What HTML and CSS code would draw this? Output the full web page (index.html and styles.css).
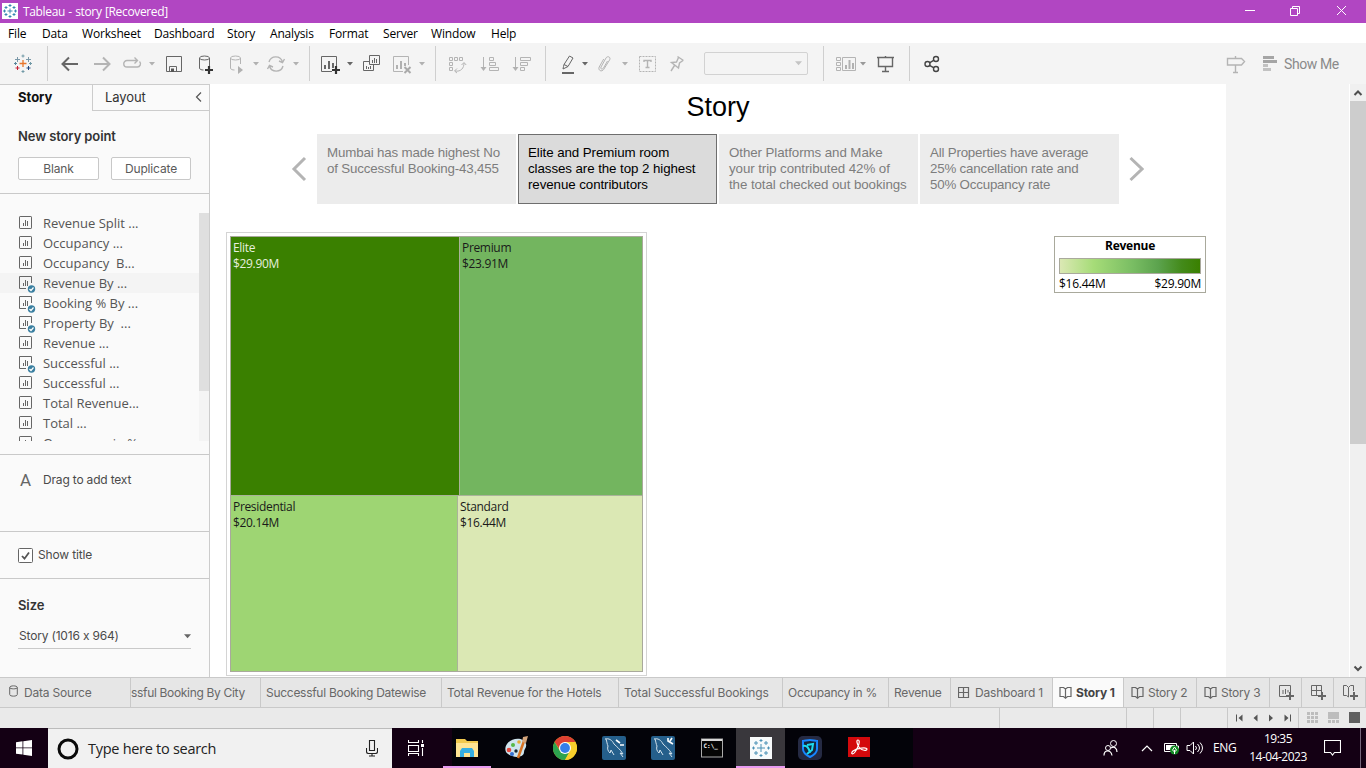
FILE: index.html
```html
<!DOCTYPE html>
<html lang="en">
<head>
<meta charset="utf-8">
<title>Tableau - story [Recovered]</title>
<link rel="stylesheet" href="styles.css">
</head>
<body>
<svg class="defs" width="0" height="0">
  <symbol id="sheet" viewBox="0 0 15 15"><rect x="1.500" y="1.500" width="12" height="12" rx=".6" fill="none" stroke="#666"/><path d="M5.500 8v3M7.500 5v6M9.500 6v5" stroke="#666" fill="none"/></symbol>
  <symbol id="sheet-used" viewBox="0 0 18 18"><path d="M8 13.500H1.500v-12h12V8" fill="none" stroke="#666"/><path d="M5.500 8v3M7.500 5v6M9.500 6v5" stroke="#666" fill="none"/><circle cx="13.500" cy="14" r="3.700" fill="#3a7fa0"/><path d="M11.500 14l1.500 1.500 2.500-3" fill="none" stroke="#fff" stroke-width="1.200"/></symbol>
  <symbol id="caret" viewBox="0 0 6 4"><path d="M0 0h6L3 3.600z"/></symbol>
  <symbol id="book" viewBox="0 0 13 13"><path d="M6.500 3v9M6.500 3L4.500 1.500H1v9h3.500l2 1.700 2-1.700H12v-9H8.500z" fill="none" stroke="#666" stroke-width="1.200"/></symbol>
</svg>

<header class="titlebar">
  <svg class="app-icon" viewBox="0 0 16 16"><path fill="#fff" d="M0 0h16v16H0z"/><path d="M8 1v3M6.500 2.500h3M8 12v3M6.500 13.500h3M1 8h3M2.500 6.500v3M12 8h3M13.500 6.500v3M8 5.500v5M5.500 8h5M4 3v3M2.500 4.500h3M12 3v3M10.500 4.500h3M4 10v3M2.500 11.500h3M12 10v3M10.500 11.500h3" stroke="#2b80ad" stroke-width=".9"/></svg>
  <span class="title-text">Tableau - story [Recovered]</span>
  <svg class="window-controls" viewBox="0 0 104 14"><path d="M0 7.500h10M45.500 5.500h7v7h-7zM47.500 5V3.500h7v7H53M92 3l9 9M101 3l-9 9" fill="none" stroke="#fff"/></svg>
</header>

<nav class="menu">
  <span class="w34">File</span><span class="w40">Data</span><span class="w72">Worksheet</span><span class="w73">Dashboard</span><span class="w43">Story</span><span class="w59">Analysis</span><span class="w54">Format</span><span class="w48">Server</span><span class="w60">Window</span><span>Help</span>
</nav>

<div class="toolbar">
  <svg class="ic" viewBox="0 0 20 20"><path d="M10 6v7M6.500 9.500h7" stroke="#e8762c" stroke-width="1.300"/><path d="M4.500 3v5M2 5.500h5M15.500 3v5M13 5.500h5" stroke="#7a98a8"/><path d="M4.500 12v4M2.500 14h4" stroke="#c72035"/><path d="M15.500 12v4M13.500 14h4" stroke="#1f447e"/><path d="M10 .5v3M8.500 2h3M10 16v3M8.500 17.500h3M17.500 8v3M16 9.500h3" stroke="#7099a6"/><path d="M2.500 8v3M1 9.500h3" stroke="#5b879b"/></svg>
  <i class="sep m14"></i>
  <svg class="ic m12" viewBox="0 0 20 20"><path d="M18 10H3M9 3.500L2.500 10 9 16.500" class="s2 dark"/></svg>
  <svg class="ic m12" viewBox="0 0 20 20"><path d="M2 10h15M11 3.500l6.500 6.500-6.500 6.500" class="s2 dim"/></svg>
  <svg class="ic m10" viewBox="0 0 20 20"><path d="M8 6.500H5a3.200 3.200 0 0 0 0 6.500h10a3.200 3.200 0 0 0 2.500-5.500M8 6.500h7M12.500 3.500l3 3-3 3" class="s1 dim thick"/></svg>
  <svg class="ca dimfill m7"><use href="#caret"/></svg>
  <svg class="ic m9" viewBox="0 0 20 20"><path d="M2.500 2.500h15v15h-15zM5.500 17v-4.500h7V17" class="s1 dark"/><path d="M7 14.500h3V18H7z" fill="#555"/></svg>
  <svg class="ic m12" viewBox="0 0 20 20"><path d="M3.500 4v10c0 1.500 2 2 4 2M13.500 4v8" class="s1 dark"/><ellipse cx="8.500" cy="4" rx="5" ry="2" class="s1 dark"/><path d="M13 12v8M9 16h8" class="plus"/></svg>
  <svg class="ic m10" viewBox="0 0 20 20"><path d="M4.500 4v10c0 1.500 2 2 4 2M14.500 4v6" class="s1 dim"/><ellipse cx="9.500" cy="4" rx="5" ry="2" class="s1 dim"/><path d="M12 12l5 4-5 4z" fill="#b1b1b1"/></svg>
  <svg class="ca dimfill m7"><use href="#caret"/></svg>
  <svg class="ic m7" viewBox="0 0 20 20"><path d="M3 8a7 7 0 0 1 13.500 0M17 12a7 7 0 0 1-13.500 0M18.500 5l-2 3.500-3.500-1.500M1.500 15l2-3.500L7 13" class="s1 dim thick"/></svg>
  <svg class="ca dimfill m7"><use href="#caret"/></svg>
  <i class="sep m10"></i>
  <svg class="ic m11" viewBox="0 0 20 20"><path d="M11 17.500H.5v-15h15V12" class="s1 dark"/><path d="M4 11v4M8 7v8M12 9v5" stroke="#666" stroke-width="2"/><path d="M15 12v8M11 16h8" class="plus"/></svg>
  <svg class="ca m6"><use href="#caret"/></svg>
  <svg class="ic m8" viewBox="0 0 20 20"><path d="M8.500 1.500h10v9h-10zM8 7.500H2.500v9h10V11M11.500 6v3M13.500 4v5M15.500 5v4M5.500 12v3M7.500 13v2M9.500 12v3" class="s1 dark"/></svg>
  <svg class="ic m11" viewBox="0 0 20 20"><path d="M11 17.500H1.500v-15h15V11" class="s1 dim"/><path d="M5 11v4M9 7v8M13 9v3" stroke="#b1b1b1" stroke-width="2"/><path d="M12.500 13l6 6M18.500 13l-6 6" stroke="#aaa" stroke-width="2"/></svg>
  <svg class="ca dimfill m7"><use href="#caret"/></svg>
  <i class="sep m10"></i>
  <svg class="ic m11" viewBox="0 0 20 20"><path d="M2.500 3.500h3v3h-3zM7.500 3.500h3v3h-3zM12.500 3.500h3v3h-3zM2.500 8.500h3v3h-3zM2.500 13.500h3v3h-3zM8 17c6 1 9-3 9-8M14.500 11L17 8.500l2.200 2.500M10 14.500L7.500 17l2.500 2" class="s1 dim"/></svg>
  <svg class="ic m13" viewBox="0 0 20 20"><path d="M3.500 3v13M9.500 3.500h4v3h-4zM9.500 8.500h6v3h-6zM9.500 13.500h9v3h-9z" class="s1 dim"/><path d="M0.500 13h6l-3 4z" fill="#b1b1b1"/></svg>
  <svg class="ic m12" viewBox="0 0 20 20"><path d="M3.500 3v13M8.500 3.500h10v3h-10zM8.500 8.500h7v3h-7zM8.500 13.500h4v3h-4z" class="s1 dim"/><path d="M0.500 13h6l-3 4z" fill="#b1b1b1"/></svg>
  <i class="sep m13"></i>
  <svg class="ic m12" viewBox="0 0 20 20"><path d="M6 10.500l5.500-8.500 3.500 2-5 8.500-3 1.500-2 1 .5-2.500zM6 10.500l4 2" class="s1 dark"/><path d="M4 18h12v2H4z" fill="#666"/></svg>
  <svg class="ca m4"><use href="#caret"/></svg>
  <svg class="ic m7" viewBox="0 0 20 20"><path d="M12.500 7l-4 7c-1 2-3.500 1-2.500-1l5-9c1.500-2.500 5-1 3.700 1.800l-6 9.600c-2 3-6 1-4.500-2.400l4.500-8" class="s1 dim"/></svg>
  <svg class="ca dimfill m7"><use href="#caret"/></svg>
  <svg class="ic m9" viewBox="0 0 20 20"><path d="M2.500 2.500h16v15h-16z" class="s1 dim" stroke-dasharray="2 1"/><path d="M7 8V6.500h7V8M10.500 6.500v7M8.500 13.500h4" class="s1 dim thick"/></svg>
  <svg class="ic m10" viewBox="0 0 20 20"><path d="M10.500 2.500l6 4M11.500 3.500L9.500 8l-5 .5 7 5.500 1-5L16 6.500M7.500 11.500L4 17" class="s1 dim thick"/></svg>
  <div class="combo m17"><svg class="ca"><use href="#caret"/></svg></div>
  <i class="sep m15"></i>
  <svg class="ic m12" viewBox="0 0 20 20"><path d="M.5 3.500h4v3h-4zM.5 8.500h4v3h-4zM.5 13.500h4v3h-4zM6.500 3.500h13v13h-13z" class="s1 dim"/><path d="M10 11v4M13.500 6v9M17 9v6" stroke="#b1b1b1" stroke-width="2"/></svg>
  <svg class="ca midfill m4"><use href="#caret"/></svg>
  <svg class="ic m9" viewBox="0 0 20 20"><path d="M2 3.500h17M3.500 4v8.500h14V4M10.500 13v5M7 17.500h7M10.500 2v1.500" class="s1 dark thick"/></svg>
  <i class="sep m14"></i>
  <svg class="ic m12" viewBox="0 0 20 20"><path d="M7.500 8.800l4.500-2.600M7.500 11.300l4.500 2.500" class="s1 share" /><circle cx="5.500" cy="10" r="2.500" class="s1 share"/><circle cx="14" cy="5" r="2.500" class="s1 share"/><circle cx="14" cy="15" r="2.500" class="s1 share"/></svg>
  <div class="show-me">
    <svg class="ic" viewBox="0 0 20 20"><path d="M1.500 4.500h14l3 3-3 3.500h-14zM9.500 2v2M9.500 11v7.500M7 18.500h5" class="s1 dim thick"/></svg>
    <svg class="bars" viewBox="0 0 15 16"><path d="M0 0h11v3H0zM0 4h14v3H0z" fill="#a5a5a5"/><path d="M0 8h5v3H0zM0 12h8v3H0z" fill="#c2c2c2"/></svg>
    <span>Show Me</span>
  </div>
</div>

<main class="workspace">
  <aside class="sidebar">
    <div class="side-tabs"><b>Story</b><div class="layout-tab"><span>Layout</span><svg viewBox="0 0 8 10"><path d="M6 .5L1.500 5 6 9.500" fill="none" stroke="#555" stroke-width="1.200"/></svg></div></div>
    <section class="new-point">
      <h3>New story point</h3>
      <div class="buttons"><button>Blank</button><button>Duplicate</button></div>
    </section>
    <section class="sheets">
      <div class="sheet-list">
        <div class="row"><svg><use href="#sheet" width="15" height="15"/></svg>Revenue Split ...</div>
        <div class="row"><svg><use href="#sheet" width="15" height="15"/></svg>Occupancy ...</div>
        <div class="row"><svg><use href="#sheet" width="15" height="15"/></svg>Occupancy &nbsp;B...</div>
        <div class="row hover"><svg><use href="#sheet-used" width="18" height="18"/></svg>Revenue By ...</div>
        <div class="row"><svg><use href="#sheet-used" width="18" height="18"/></svg>Booking % By ...</div>
        <div class="row"><svg><use href="#sheet-used" width="18" height="18"/></svg>Property By &nbsp;...</div>
        <div class="row"><svg><use href="#sheet" width="15" height="15"/></svg>Revenue ...</div>
        <div class="row"><svg><use href="#sheet-used" width="18" height="18"/></svg>Successful ...</div>
        <div class="row"><svg><use href="#sheet" width="15" height="15"/></svg>Successful ...</div>
        <div class="row"><svg><use href="#sheet" width="15" height="15"/></svg>Total Revenue...</div>
        <div class="row"><svg><use href="#sheet" width="15" height="15"/></svg>Total ...</div>
        <div class="row"><svg><use href="#sheet" width="15" height="15"/></svg>Occupancy in %</div>
      </div>
      <div class="side-scroll"><i></i></div>
    </section>
    <section class="drag"><span class="letter">A</span><span>Drag to add text</span></section>
    <section class="show-title"><svg viewBox="0 0 15 15"><rect x=".5" y=".5" width="14" height="14" rx="1" fill="#fff" stroke="#666"/><path d="M4 8l2.500 2.700L11 4.500" fill="none" stroke="#555" stroke-width="1.800"/></svg>Show title</section>
    <section class="size"><h3>Size</h3><div class="select">Story (1016 x 964)<svg viewBox="0 0 6 4"><path d="M0 0h6L3 3.600z"/></svg></div></section>
  </aside>

  <div class="canvas">
    <h1>Story</h1>
    <div class="points">
      <svg class="nav-arrow" viewBox="0 0 16 26"><path d="M14 2L3 13l11 11" fill="none" stroke="#b4b4b4" stroke-width="3"/></svg>
      <div class="point p1">Mumbai has made highest No<br>of Successful Booking-43,455</div>
      <div class="point active">Elite and Premium room<br>classes are the top 2 highest<br>revenue contributors</div>
      <div class="point">Other Platforms and Make<br>your trip contributed 42% of<br>the total checked out bookings</div>
      <div class="point p4">All Properties have average<br>25% cancellation rate and<br>50% Occupancy rate</div>
      <svg class="nav-arrow" viewBox="0 0 16 26"><path d="M2.500 2L14 13 2.500 24" fill="none" stroke="#b4b4b4" stroke-width="3"/></svg>
    </div>
    <div class="viz">
      <div class="frame">
        <div class="treemap">
          <div class="tm-row top"><div class="cell elite">Elite<br>$29.90M</div><div class="cell premium">Premium<br>$23.91M</div></div>
          <div class="tm-row bottom"><div class="cell presidential">Presidential<br>$20.14M</div><div class="cell standard">Standard<br>$16.44M</div></div>
        </div>
      </div>
      <div class="legend"><b>Revenue</b><div class="ramp"></div><div class="range"><span>$16.44M</span><span>$29.90M</span></div></div>
    </div>
  </div>
  <div class="scrollbar">
    <svg viewBox="0 0 16 17"><path d="M4.500 11L8 7.500l3.500 3.500" fill="none" stroke="#505050" stroke-width="2"/></svg>
    <i></i>
    <svg viewBox="0 0 16 17"><path d="M4.500 6.500L8 10l3.500-3.500" fill="none" stroke="#505050" stroke-width="2"/></svg>
  </div>
</main>

<div class="sheet-tabs">
  <div class="tab t-source"><svg viewBox="0 0 9 12"><path d="M.7 2.500v7c0 2.200 7.600 2.200 7.600 0v-7C8.300.3.7.3.7 2.500c0 1.800 7.600 1.800 7.600 0" fill="none" stroke="#666"/></svg>Data Source</div>
  <div class="tab t-city"><span>ssful Booking By City</span></div>
  <div class="tab t-date">Successful Booking Datewise</div>
  <div class="tab t-hotels">Total Revenue for the Hotels</div>
  <div class="tab t-bookings">Total Successful Bookings</div>
  <div class="tab t-occ">Occupancy in %</div>
  <div class="tab t-rev">Revenue</div>
  <div class="tab t-dash"><svg viewBox="0 0 12 12"><path d="M.5.500h10v10H.5zM5.500 1v10M1 5.500h10" fill="none" stroke="#666" stroke-width="1.200"/></svg>Dashboard 1</div>
  <div class="tab t-story1"><svg viewBox="0 0 13 13"><use href="#book"/></svg><b>Story 1</b></div>
  <div class="tab t-story"><svg viewBox="0 0 13 13"><use href="#book"/></svg>Story 2</div>
  <div class="tab t-story"><svg viewBox="0 0 13 13"><use href="#book"/></svg>Story 3</div>
  <div class="tab t-add"><svg viewBox="0 0 17 17"><path d="M8 12.500H1.500v-11h11V8M5 6v4M7.500 5v5M10 6v2.500" fill="none" stroke="#666"/><path d="M12 8v8M8 12h8" stroke="#666" stroke-width="2"/></svg></div>
  <div class="tab t-add"><svg viewBox="0 0 17 17"><path d="M8 11.500H1.500v-10h10V8M6.500 2v10M1 6.500h11" fill="none" stroke="#666"/><path d="M12 8v8M8 12h8" stroke="#666" stroke-width="2"/></svg></div>
  <div class="tab t-add"><svg viewBox="0 0 17 17"><path d="M6.500 13V3.500L4.500 1.500h-3v10h3l2 1.500M6.500 3.500l2-2h3V7" fill="none" stroke="#666"/><path d="M12 8v8M8 12h8" stroke="#666" stroke-width="2"/></svg></div>
</div>

<div class="status">
  <i class="s127"></i><i class="s27"></i><i class="s27"></i><i class="s47"></i>
  <div class="pager"><svg viewBox="0 0 56 8"><path d="M1.500 .5v7M55.500 .5v7" stroke="#555"/><path d="M7.500.500v7L3.500 4zM22.500.500v7L18.500 4zM34 .5v7L38 4zM49.500.500v7l4-3.500z" fill="#555"/></svg></div>
  <div class="views"><svg viewBox="0 0 53 11"><path d="M0 0h3v3H0zM4 0h3v3H4zM8 0h3v3H8zM0 4h3v3H0zM4 4h3v3H4zM8 4h3v3H8zM0 8h3v3H0zM4 8h3v3H4zM8 8h3v3H8zM21 0h11v7H21zM21 8h3v3h-3zM25 8h3v3h-3zM29 8h3v3h-3z" fill="#bdbdbd"/><path d="M42 0h11v11H42z" fill="#606060"/></svg></div>
</div>

<footer class="taskbar">
  <div class="start"><svg viewBox="0 0 16 16"><path d="M0 2.200l6.500-.9v6.200H0zM7.300 1.200L16 0v7.500H7.300zM0 8.300h6.500v6.200L0 13.700zM7.300 8.300H16V16l-8.700-1.200z" fill="#fff"/></svg></div>
  <div class="search">
    <svg class="ring" viewBox="0 0 22 22"><circle cx="11" cy="11" r="9" fill="none" stroke="#0a0a0a" stroke-width="3"/></svg>
    <span>Type here to search</span>
    <svg class="mic" viewBox="0 0 12 17"><path d="M3.500.500h5v10h-5zM.5 8v3.500c0 1 1 2 2 2h7c1 0 2-1 2-2V8M6 13.500V16M3 16h6" fill="none" stroke="#222" stroke-width="1.100"/></svg>
  </div>
  <div class="taskview"><svg viewBox="0 0 17 16"><path d="M.5 0v2.500h10V0M.5 5.500h10v6H.5zM.5 16v-2.500h10V16M14.500 0v3M14.500 8v8" fill="none" stroke="#fff" stroke-width="1.100"/><path d="M13 4h3v3h-3z" fill="#fff"/></svg></div>
  <div class="apps">
    <div class="app running explorer"><svg viewBox="0 0 24 24"><path d="M1 4V3h9l2 2h11v16H1z" fill="#f1c94e"/><path d="M1 7h22v14H1z" fill="#ffe493"/><path d="M5 21v-6l2-3h10l2 3v6h-4v-4H9v4z" fill="#35aee2"/></svg></div>
    <div class="app"><svg viewBox="0 0 24 24"><path d="M3 8C8 1 20 1 22 8c1 4-2 5-2 8 0 7-14 6-18 0-1-2-1-5 1-8z" fill="#cfe4ee"/><circle cx="5" cy="14" r="2.300" fill="#e5483d"/><circle cx="9" cy="9" r="2" fill="#57b947"/><circle cx="15" cy="6" r="1.800" fill="#e7ab35"/><circle cx="8" cy="18" r="2" fill="#356fd0"/><circle cx="12" cy="15" r="1.700" fill="#142733"/><path d="M14 22l6-17" stroke="#d87324" stroke-width="2.500"/><path d="M18 6l1-5 5-1-2 7z" fill="#d5a57c"/></svg></div>
    <div class="app"><svg viewBox="0 0 24 24"><circle cx="12" cy="12" r="12" fill="#eac522"/><path d="M1.600 6A12 12 0 0 1 22.400 6H12L7 14z" fill="#dd4032"/><path d="M1.600 6A12 12 0 0 0 12 24l5-9-10 0z" fill="#2ca34f"/><path d="M12 6h10.400A12 12 0 0 1 12 24l5-9z" fill="#f8ce2c"/><circle cx="12" cy="12" r="6" fill="#fff"/><circle cx="12" cy="12" r="4.900" fill="#347fea"/></svg></div>
    <div class="app"><svg viewBox="0 0 24 24"><rect width="24" height="24" rx="2" fill="#255f8b"/><path d="M3 3c4-1 7 1 9 5 3 3 6 5 9 10l-3-1 3 4M4 3c1 3 1 5 2 7-1 3 0 5 2 7l1-3 3 5" fill="none" stroke="#d3e2ec"/><path d="M14 4l4 3M18 9h4" stroke="#fff" stroke-width="1.600"/></svg></div>
    <div class="app"><svg viewBox="0 0 24 24"><rect width="24" height="24" rx="2" fill="#255f8b"/><path d="M3 3c4-1 7 1 9 5 3 3 6 5 9 10l-3-1 3 4M4 3c1 3 1 5 2 7-1 3 0 5 2 7l1-3 3 5" fill="none" stroke="#d3e2ec"/><path d="M17 2v3l5 3M21 2l-2 3" stroke="#fff" stroke-width="1.600" fill="none"/></svg></div>
    <div class="app"><svg viewBox="0 0 24 24"><rect x="1.500" y="3" width="21" height="18" fill="#050505" stroke="#aaa"/><path d="M2 3h20v2H2z" fill="#d8d8d8"/><text x="3.500" y="12" class="prompt">C:\_</text></svg></div>
    <div class="app running selected"><svg viewBox="0 0 24 24"><path fill="#f7fafb" d="M1 1h22v22H1z"/><path d="M12 8v8M8 12h8M12 3v3M10.500 4.500h3M12 18v3M10.500 19.500h3M3 12h3M4.500 10.500v3M18 12h3M19.500 10.500v3M7 5v4M5 7h4M17 5v4M15 7h4M7 15v4M5 17h4M17 15v4M15 17h4" stroke="#4a91b5"/></svg></div>
    <div class="app"><svg viewBox="0 0 24 24"><rect width="24" height="24" rx="5" fill="#252a43"/><path d="M12 4c3 0 5 1 7 1v8c0 4-3 6-7 8-4-2-7-4-7-8V5c2 0 4-1 7-1z" fill="#16253d" stroke="#1786ff" stroke-width="2"/><path d="M5 10c4-1 6 2 7 7M9 9l6-1-1 6-5 4" fill="none" stroke="#1bdcef" stroke-width="2"/></svg></div>
    <div class="app"><svg viewBox="0 0 24 24"><path fill="#d4090c" d="M1 1h22v20H1z"/><path d="M11 4c-2 0-1 4 1 7 3 4 8 4 8 2s-10-1-14 2c-3 3 0 4 2 1 3-4 6-12 3-12z" fill="none" stroke="#fff" stroke-width="1.200"/></svg></div>
  </div>
  <div class="tray">
    <svg class="people" viewBox="0 0 15 16"><circle cx="10.500" cy="3.500" r="3" fill="none" stroke="#fff"/><circle cx="5" cy="8" r="2.500" fill="none" stroke="#fff"/><path d="M1 15.500c0-6 7-6 8 0M8 8c3-2 6 0 6 4" fill="none" stroke="#fff" stroke-width="1.200"/></svg>
    <svg class="chev" viewBox="0 0 12 8"><path d="M1 7l5-5 5 5" fill="none" stroke="#fff" stroke-width="1.200"/></svg>
    <svg class="battery" viewBox="0 0 16 14"><path d="M.5 2.500h12v8H.5zM13 5h1.500v3" fill="none" stroke="#fff"/><path d="M2 4h9v5H2z" fill="#fff"/><circle cx="10.500" cy="9" r="4.500" fill="#128b24"/><path d="M10.500 13V9M8.500 9l2-3 2 3-2 2z" stroke="#fff" fill="none"/></svg>
    <svg class="sound" viewBox="0 0 18 14"><path d="M1 4.500h3L7.500 1v12L4 9.500H1zM9.500 5q2 2 0 4M11.500 3q4 4 0 8M14 1.500q5 5.500 0 11" fill="none" stroke="#fff"/></svg>
    <span class="eng">ENG</span>
    <div class="clock">19:35<br>14-04-2023</div>
    <svg class="notify" viewBox="0 0 17 16"><path d="M.5.500h16v12h-6l-2 2.500-2-2.500h-6z" fill="none" stroke="#fff" stroke-width="1.100"/></svg>
  </div>
</footer>
</body>
</html>
```
FILE: styles.css
```css
* { box-sizing: border-box; }
body { margin: 0; width: 1366px; height: 768px; overflow: hidden; display: flex; flex-direction: column; font: 12px/16px "Open Sans", "Noto Sans", sans-serif; color: #000; background: #fff; }
svg { display: block; flex: none; }
.defs { position: absolute; }
h1, h3 { margin: 0; }

.titlebar { height: 23px; flex: none; display: flex; align-items: center; background: #b146c2; color: #fff; padding-left: 2px; }
.app-icon { width: 16px; height: 16px; margin-top: -2px; }
.title-text { margin-left: 5px; letter-spacing: -.35px; word-spacing: .6px; }
.window-controls { width: 104px; height: 14px; margin: -4px 17px 0 auto; }

.menu { height: 20px; flex: none; display: flex; padding: 3px 0 0 8px; letter-spacing: -.17px; line-height: 16px; }
.w34 { width: 34px; } .w40 { width: 40px; } .w72 { width: 72px; } .w73 { width: 73px; } .w43 { width: 43px; }
.w59 { width: 59px; } .w54 { width: 54px; } .w48 { width: 48px; } .w60 { width: 60px; }

.toolbar { height: 41px; flex: none; display: flex; align-items: center; background: #f4f4f4; padding-left: 13px; }
.ic { width: 20px; height: 20px; }
.ca { width: 6px; height: 4px; fill: #666; }
.dimfill { fill: #b1b1b1; }
.midfill { fill: #999; }
.sep { width: 1px; height: 35px; background: #cfcfcf; flex: none; }
.s1, .s2 { fill: none; }
.s2 { stroke-width: 2; }
.dark { stroke: #666; }
.dim { stroke: #b4b4b4; }
.share { stroke: #444; stroke-width: 1.4; }
.thick { stroke-width: 1.4; }
.plus { stroke: #333; stroke-width: 2.2; }
.m4 { margin-left: 4px; } .m6 { margin-left: 6px; } .m7 { margin-left: 7px; } .m8 { margin-left: 8px; } .m9 { margin-left: 9px; }
.m10 { margin-left: 10px; } .m11 { margin-left: 11px; } .m12 { margin-left: 12px; } .m13 { margin-left: 13px; }
.m14 { margin-left: 14px; } .m15 { margin-left: 15px; } .m17 { margin-left: 17px; }
.combo { width: 104px; height: 23px; border: 1px solid #d2d2d2; border-radius: 2px; display: flex; align-items: center; justify-content: flex-end; padding-right: 5px; }
.combo .ca { fill: #c4c4c4; width: 7px; height: 5px; }
.show-me { margin-left: auto; display: flex; align-items: center; padding-right: 27px; color: #8a8a8a; font: 14px/18px Roboto, sans-serif; }
.show-me span { width: 55px; white-space: nowrap; letter-spacing: -.4px; }
.bars { width: 15px; height: 16px; margin: 0 6px 0 17px; }

.workspace { height: 593px; flex: none; display: flex; background: #f4f4f4; }
.sidebar { width: 210px; flex: none; background: #fafafa; border-right: 1px solid #ccc; border-top: 1px solid #ccc; color: #4a4a4a; display: flex; flex-direction: column; font-feature-settings: "calt" 0; }
.sidebar section { border-bottom: 1px solid #c9c9c9; flex: none; }
.side-tabs { height: 26px; display: flex; flex: none; color: #333; }
.side-tabs b { width: 92px; padding-left: 18px; color: #111; font: 700 13px/25px Inter, sans-serif; }
.layout-tab { flex: 1; display: flex; align-items: center; justify-content: space-between; border: solid #ccc; border-width: 0 0 1px 1px; padding: 0 6px 0 12px; font: 13px/25px Inter, sans-serif; letter-spacing: -.1px; }
.layout-tab svg { width: 8px; height: 10px; margin-top: -2px; }
.new-point { height: 83px; padding: 17px 18px 0; }
.sidebar h3 { font: 600 13px/17px Inter, sans-serif; color: #333; letter-spacing: -.1px; }
.buttons { display: flex; gap: 12px; margin-top: 12px; }
.buttons button { height: 23px; width: 81px; padding: 0; background: #fff; border: 1px solid #c8c8c8; border-radius: 2px; font: 12px/20px Inter, sans-serif; color: #5a5a5a; letter-spacing: -.15px; }
.buttons button + button { width: 80px; }
.sheets { height: 261px; padding-top: 19px; display: flex; align-items: flex-start; }
.sheet-list { width: 199px; height: 228px; overflow: hidden; font: 13px/20px "Open Sans", sans-serif; color: #555; }
.row { height: 20px; padding-left: 18px; display: flex; align-items: flex-start; letter-spacing: -.01px; }
.row svg { width: 18px; height: 20px; margin: 2px 7px 0 0; }
.hover { background: #f4f4f4; }
.side-scroll { width: 10px; height: 228px; background: #f4f4f4; }
.side-scroll i { display: block; height: 178px; background: #dfdfdf; }
.drag { height: 77px; padding: 16px 20px 0; display: flex; font: 12px/18px Inter, sans-serif; letter-spacing: -.18px; }
.letter { width: 23px; font: 17px/18px Roboto, sans-serif; color: #666; }
.show-title { height: 47px; display: flex; align-items: center; padding-left: 18px; gap: 5px; font: 12px/18px Inter, sans-serif; letter-spacing: -.15px; }
.show-title svg { width: 15px; height: 15px; }
.sidebar .size { border: 0; padding: 18px 18px 0; }
.select { height: 25px; margin-top: 10px; padding-left: 1px; border-bottom: 1px solid #c9c9c9; font: 12px/24px Inter, sans-serif; letter-spacing: -.18px; display: flex; justify-content: space-between; align-items: center; }
.select svg { width: 7px; height: 5px; fill: #666; }

.canvas { width: 1016px; background: #fff; flex: none; }
.canvas h1 { font: 27px/32px "Liberation Sans", sans-serif; text-align: center; height: 50px; padding-top: 7px; }
.points { height: 70px; display: flex; align-items: center; gap: 2px; padding-left: 81px; }
.point { width: 199px; height: 70px; background: #ececec; color: #7d7d7d; padding: 11px 0 0 10px; font: 13.33px/16px "Liberation Sans", sans-serif; letter-spacing: -.08px; white-space: nowrap; flex: none; }
.p1 { letter-spacing: -.16px; }
.p4 { letter-spacing: -.2px; }
.active { background: #dbdbdb; color: #000; border: 1px solid #6e6e6e; padding: 10px 0 0 9px; }
.nav-arrow { width: 16px; height: 26px; }
.nav-arrow:first-child { margin-right: 8px; }
.nav-arrow:last-child { margin-left: 7px; }
.viz { display: flex; justify-content: space-between; align-items: flex-start; padding: 28px 20px 0 16px; }
.frame { width: 421px; height: 444px; border: 1px solid #d4d4d4; padding: 3px; }
.treemap { height: 436px; border: 1px solid #a9a99c; }
.tm-row { display: flex; }
.top { height: 259px; }
.bottom { height: 175px; }
.cell { padding: 3px 0 0 2px; line-height: 16px; color: #1a1a1a; letter-spacing: -.33px; border: solid #aab39a; border-width: 0 0 1px; flex: none; }
.bottom .cell { border-bottom: 0; }
.elite { width: 228px; background: #3a8000; color: #e6efdf; }
.premium { width: 183px; background: #73b55f; border-left-width: 1px; }
.presidential { width: 226px; background: #9ed573; }
.standard { width: 185px; background: #dbe8b4; border-left: 1px solid #aab39a; }
.legend { width: 152px; height: 57px; margin-top: 4px; border: 1px solid #a9a99c; padding: 1px 4px; letter-spacing: -.25px; }
.legend b { display: block; text-align: center; line-height: 16px; }
.ramp { height: 16px; margin-top: 4px; border: 1px solid #a9a99c; background: linear-gradient(90deg, #dbe8b4, #a6dc78 24%, #79bd63 52%, #5ca34e 70%, #438a1a 87%, #3a8000); }
.range { display: flex; justify-content: space-between; line-height: 19px; }
.scrollbar { width: 17px; margin-left: auto; background: #f0f0f0; border-left: 1px solid #fff; display: flex; flex-direction: column; }
.scrollbar svg { width: 16px; height: 17px; }
.scrollbar i { height: 343px; background: #cdcdcd; margin-bottom: auto; }

.sheet-tabs { height: 31px; flex: none; display: flex; border: solid #c9c9c9; border-width: 1px 0; background: #e6e6e6; color: #686868; font: 12px/29px Inter, sans-serif; letter-spacing: -.2px; white-space: nowrap; }
.tab { border-right: 1px solid #c9c9c9; display: flex; align-items: center; padding-left: 5px; flex: none; overflow: hidden; }
.t-source { width: 131px; padding-left: 9px; gap: 6px; }
.t-source svg { width: 9px; height: 12px; margin-top: -3px; }
.t-city { width: 130px; padding: 0; letter-spacing: -.32px; } .t-date { width: 181px; letter-spacing: -.28px; } .t-hotels { width: 177px; } .t-bookings { width: 164px; }
.t-occ { width: 106px; letter-spacing: -.3px; } .t-rev { width: 62px; }
.t-dash { width: 102px; padding-left: 7px; gap: 5px; }
.t-dash svg { width: 12px; height: 12px; }
.t-story1 { width: 71px; background: #fafafa; color: #444; padding-left: 6px; gap: 4px; letter-spacing: -.15px; }
.t-story { width: 73px; padding-left: 7px; gap: 4px; }
.t-story svg, .t-story1 svg { width: 13px; height: 13px; }
.t-add { width: 32px; padding-left: 8px; }
.t-add svg { width: 17px; height: 17px; }

.status { height: 20px; flex: none; background: #eaeaea; display: flex; justify-content: flex-end; }
.status i, .pager, .views { border-left: 1px solid #c9c9c9; }
.s127 { width: 127px; } .s27 { width: 27px; } .s47 { width: 47px; }
.pager { width: 71px; padding: 6px 0 0 7px; }
.pager svg { width: 56px; height: 8px; }
.views { width: 68px; padding: 4px 0 0 8px; }
.views svg { width: 53px; height: 11px; }

.taskbar { height: 40px; flex: none; display: flex; background: #140014; color: #fff; }
.start { width: 48px; display: flex; align-items: center; justify-content: center; }
.start svg { width: 16px; height: 16px; }
.search { width: 344px; background: #f1f1f1; border-top: 1px solid #bcbcbc; color: #222; display: flex; align-items: center; padding: 0 14px 0 9px; font-size: 14.5px; letter-spacing: -.28px; }
.ring { width: 22px; height: 22px; margin-right: 9px; }
.mic { width: 12px; height: 17px; margin-left: auto; }
.taskview { width: 50px; display: flex; align-items: center; padding-left: 16px; }
.taskview svg { width: 17px; height: 16px; }
.apps { width: 471px; display: flex; background: linear-gradient(90deg, #140014 0 10px, #030309 10px); }
.app { width: 49px; height: 40px; display: flex; align-items: center; justify-content: center; }
.app svg { width: 24px; height: 24px; }
.apps .running { border-bottom: 2px solid #e79af0; padding-top: 2px; }
.explorer { margin-left: 1px; width: 48px; }
.selected { background: #39373c; }
.prompt { font: 700 6px "DejaVu Sans Mono", monospace; fill: #fff; }
.tray { flex: 1; display: flex; align-items: center; padding-left: 190px; border-right: 1px solid #75657a; margin-right: 5px; }
.people { width: 15px; height: 16px; }
.chev { width: 12px; height: 8px; margin-left: 23px; }
.battery { width: 16px; height: 14px; margin-left: 11px; }
.sound { width: 18px; height: 14px; margin-left: 6px; }
.eng { margin-left: 9px; letter-spacing: -.4px; width: 24px; }
.clock { width: 60px; margin-left: 11px; text-align: center; line-height: 18px; letter-spacing: -.5px; white-space: nowrap; }
.notify { width: 17px; height: 16px; margin-left: 16px; }
```
